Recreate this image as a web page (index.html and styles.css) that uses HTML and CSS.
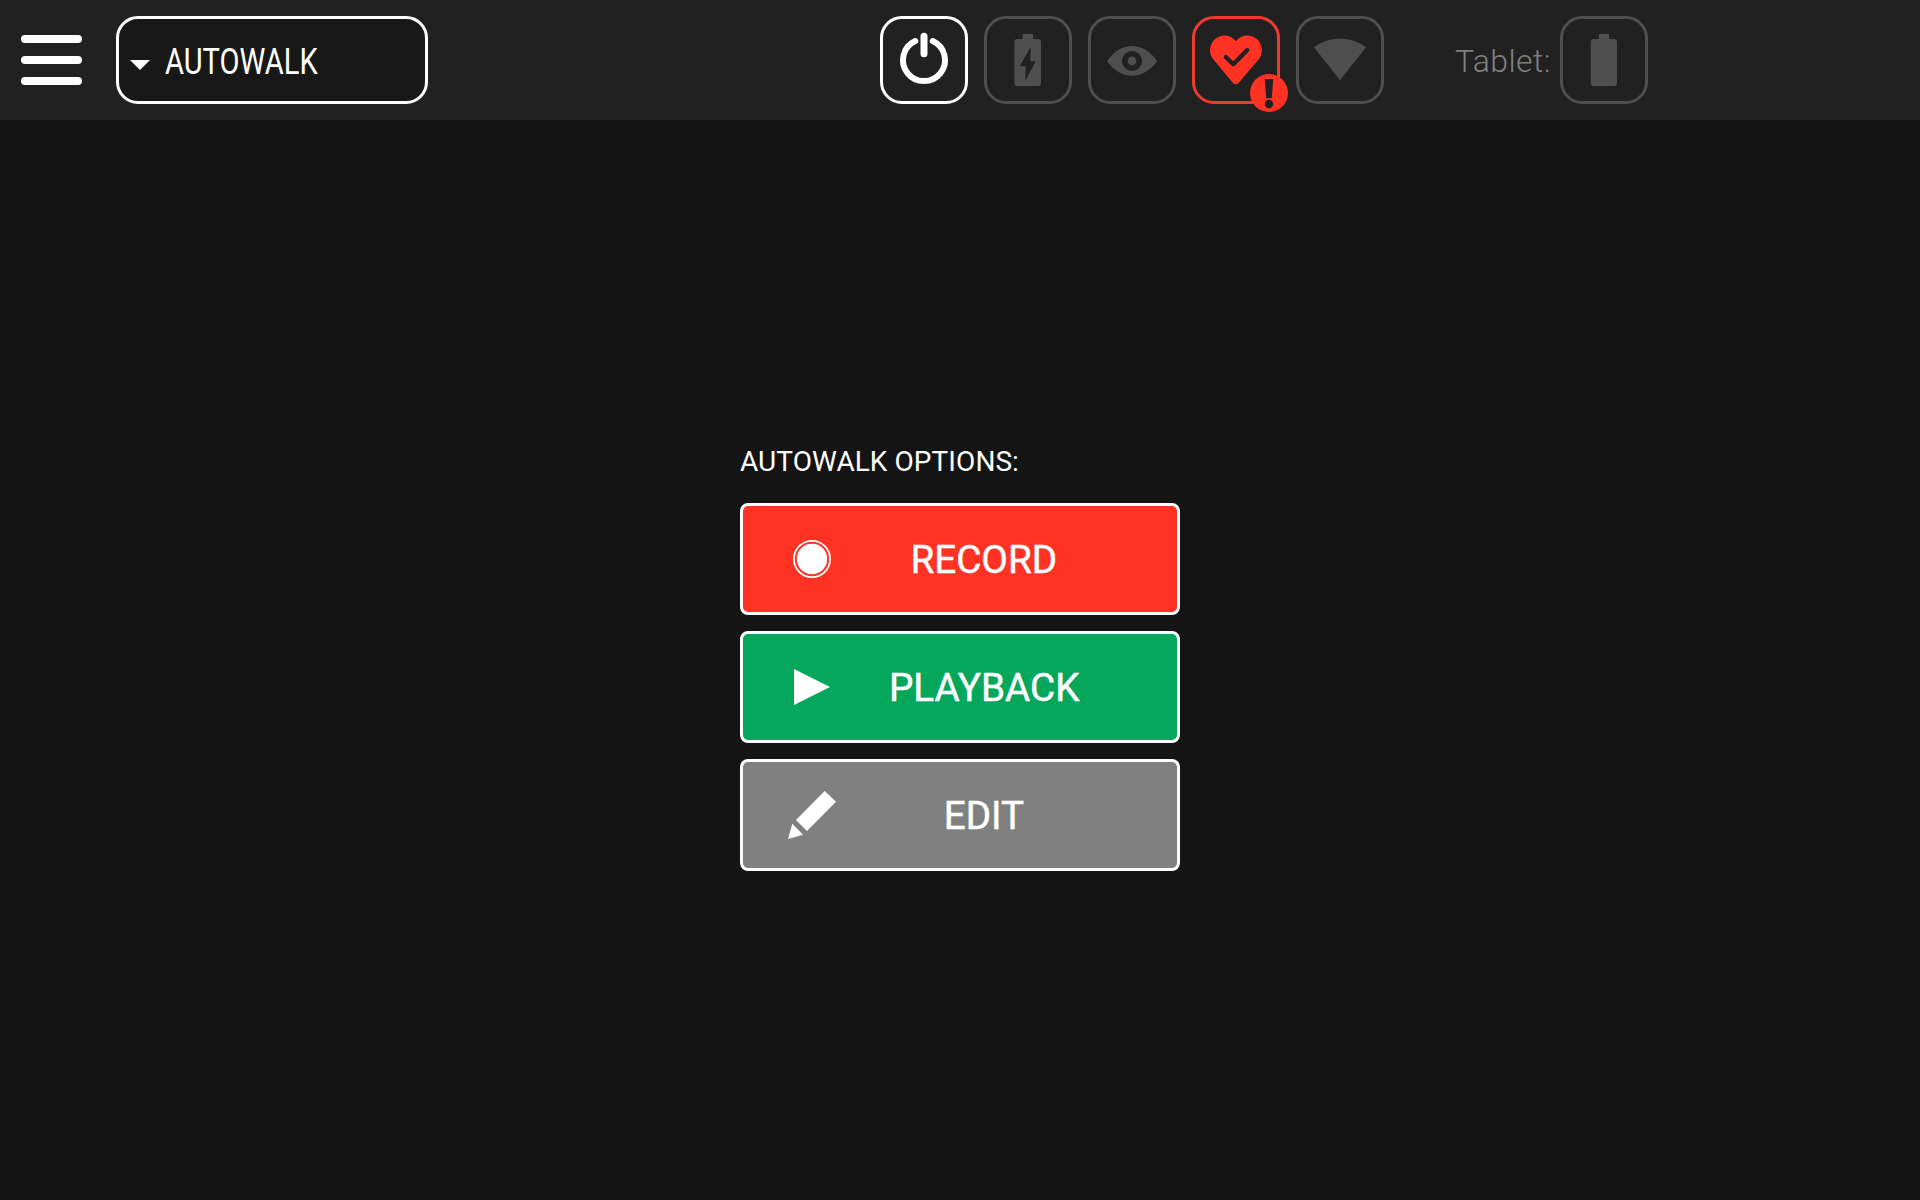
FILE: index.html
```html
<!DOCTYPE html>
<html lang="en">
<head>
<meta charset="utf-8">
<title>Autowalk</title>
<link rel="stylesheet" href="styles.css">
</head>
<body>
<header class="topbar">
  <button class="menu" aria-label="Menu"><span></span><span></span><span></span></button>
  <button class="mode"><i class="caret"></i><span class="mode-label">AUTOWALK</span></button>
  <div class="statuses">
    <div class="tile on"><svg viewBox="3 3 82 82"><path d="M35.3 25A21 21 0 1 0 52.7 25" class="line" stroke-width="6"/><path d="M44 20.3V37.7" class="line" stroke-width="7"/></svg></div>
    <div class="tile"><svg viewBox="3 3 82 82"><path fill-rule="evenodd" d="M38.7 18H49V23H54a3 3 0 0 1 3 3V67a3 3 0 0 1-3 3H33.4a3 3 0 0 1-3-3V26a3 3 0 0 1 3-3H38.7ZM46.7 31L35.7 50.3H41.7L41.3 64.7L51.7 45.3H46.3Z"/></svg></div>
    <div class="tile"><svg viewBox="3 3 82 82"><path fill-rule="evenodd" d="M19 45C33 25 55 25 69.3 45C55 64.6 33 64.6 19 45ZM44 35a10 10 0 1 0 0 20a10 10 0 1 0 0-20Z"/><circle cx="44" cy="45" r="4.4"/></svg></div>
    <div class="tile alert"><svg viewBox="3 3 82 82"><path d="M43.8 25.3C39 18.5 30 18 23.8 22.5C17.5 27.5 16.2 36.5 20.8 42.8L41 67Q43.8 69.7 46.6 67L67.2 42.8C71.8 36.5 70.5 27.5 64.2 22.5C58 18 49 18.5 43.8 25.3Z"/><path class="tick" d="M33.8 41L41.3 48.3L55.3 34"/></svg>
      <svg class="badge" viewBox="0 0 38 38"><circle cx="19" cy="19" r="19"/><path class="mark" d="M14.8 5H23.2L21.8 24.3H16.2Z"/><circle class="mark" cx="19" cy="30" r="4.2"/></svg></div>
    <div class="tile"><svg viewBox="3 3 82 82"><path d="M18 31.3Q29.8 22.4 44 22.4T70 31.3L44 64.3Z"/></svg></div>
  </div>
  <div class="tablet">
    <span class="tablet-label">Tablet:</span>
    <div class="tile"><svg viewBox="3 3 82 82"><path d="M38.8 18H49.2V23H54a3 3 0 0 1 3 3V67a3 3 0 0 1-3 3H33.7a3 3 0 0 1-3-3V26a3 3 0 0 1 3-3H38.8Z"/></svg></div>
  </div>
</header>
<main class="options">
  <h1>AUTOWALK OPTIONS:</h1>
  <button class="action record"><svg viewBox="0 0 48 48"><circle cx="24" cy="24" r="18.1" fill="none" stroke="#fff" stroke-width="1.8"/><circle cx="24" cy="24" r="15.2"/></svg><span class="label"><b>RECORD</b></span></button>
  <button class="action playback"><svg viewBox="0 0 48 48"><path d="M6 6L42 24L6 42Z"/></svg><span class="label"><b>PLAYBACK</b></span></button>
  <button class="action edit"><svg viewBox="0 0 48 48"><path d="M36.7 0L48 10.7L19 40L8 29ZM4.3 32.7L15 43.7L0 48Z"/></svg><span class="label"><b>EDIT</b></span></button>
</main>
</body>
</html>
```
FILE: styles.css
```css
* { box-sizing: border-box; }
body {
  margin: 0;
  height: 1200px;
  overflow: hidden;
  background: #141414;
  color: #fff;
  font-family: Roboto, "Liberation Sans", sans-serif;
}
button { margin: 0; padding: 0; color: inherit; font: inherit; }
svg { display: block; fill: currentColor; flex: none; }

.topbar {
  display: flex;
  align-items: center;
  height: 120px;
  padding-left: 21.4px;
  background: #212121;
}
.menu {
  display: flex;
  flex-direction: column;
  gap: 13px;
  width: 61px;
  margin-right: 33.6px;
  border: 0;
  background: none;
}
.menu span { height: 8px; border-radius: 4px; background: #fff; }
.mode {
  display: flex;
  align-items: center;
  width: 312px;
  height: 88px;
  padding-left: 11px;
  border: 3px solid #fff;
  border-radius: 22px;
  background: #181818;
}
.caret {
  margin: 10px 15px 0 0;
  border: 10px solid transparent;
  border-top-color: #fff;
  border-bottom: 0;
}
.mode-label {
  margin-top: 2px;
  font-size: 36.5px;
  font-weight: 400;
  white-space: nowrap;
  transform: scaleX(.797);
  transform-origin: left;
}
.statuses { display: flex; gap: 16px; margin-left: 452px; }
.tile {
  position: relative;
  width: 88px;
  height: 88px;
  border: 3px solid #4f4f4f;
  border-radius: 22px;
  color: #4f4f4f;
}
.tile.on { border-color: #fff; color: #fff; }
.tile.alert { border-color: #ee3b30; color: #ff3224; }
.line { fill: none; stroke: currentColor; stroke-linecap: round; }
.tick { fill: none; stroke: #212121; stroke-width: 4.3; stroke-linecap: round; stroke-linejoin: round; }
.badge { position: absolute; right: -11px; bottom: -11px; width: 38px; height: 38px; }
.mark { fill: #212121; }
.tablet { display: flex; align-items: center; margin-left: 71px; }
.tablet-label {
  width: 105px;
  padding-top: 2px;
  color: #808080;
  font-size: 32px;
  font-weight: 300;
  letter-spacing: .4px;
}

.options {
  display: flex;
  flex-direction: column;
  gap: 16px;
  width: 440px;
  margin: 325px auto 0;
}
.options h1 {
  height: 42px;
  margin: 0;
  font-size: 28px;
  font-weight: 400;
  letter-spacing: .07px;
  line-height: 33px;
  white-space: nowrap;
}
.action {
  display: flex;
  align-items: center;
  height: 112px;
  padding: 0 45px 0 45px;
  border: 3px solid #fff;
  border-radius: 8px;
}
.action svg { width: 48px; height: 48px; }
.record { background: #ff3224; }
.playback { background: #04a75b; }
.edit { background: #808080; }
.label { flex: 1; padding-top: 2px; text-align: center; font-size: 39.4px; line-height: 48px; }
.label b { display: inline-block; font-weight: 400; -webkit-text-stroke: .5px #fff; transform: scaleX(.98); }
```
